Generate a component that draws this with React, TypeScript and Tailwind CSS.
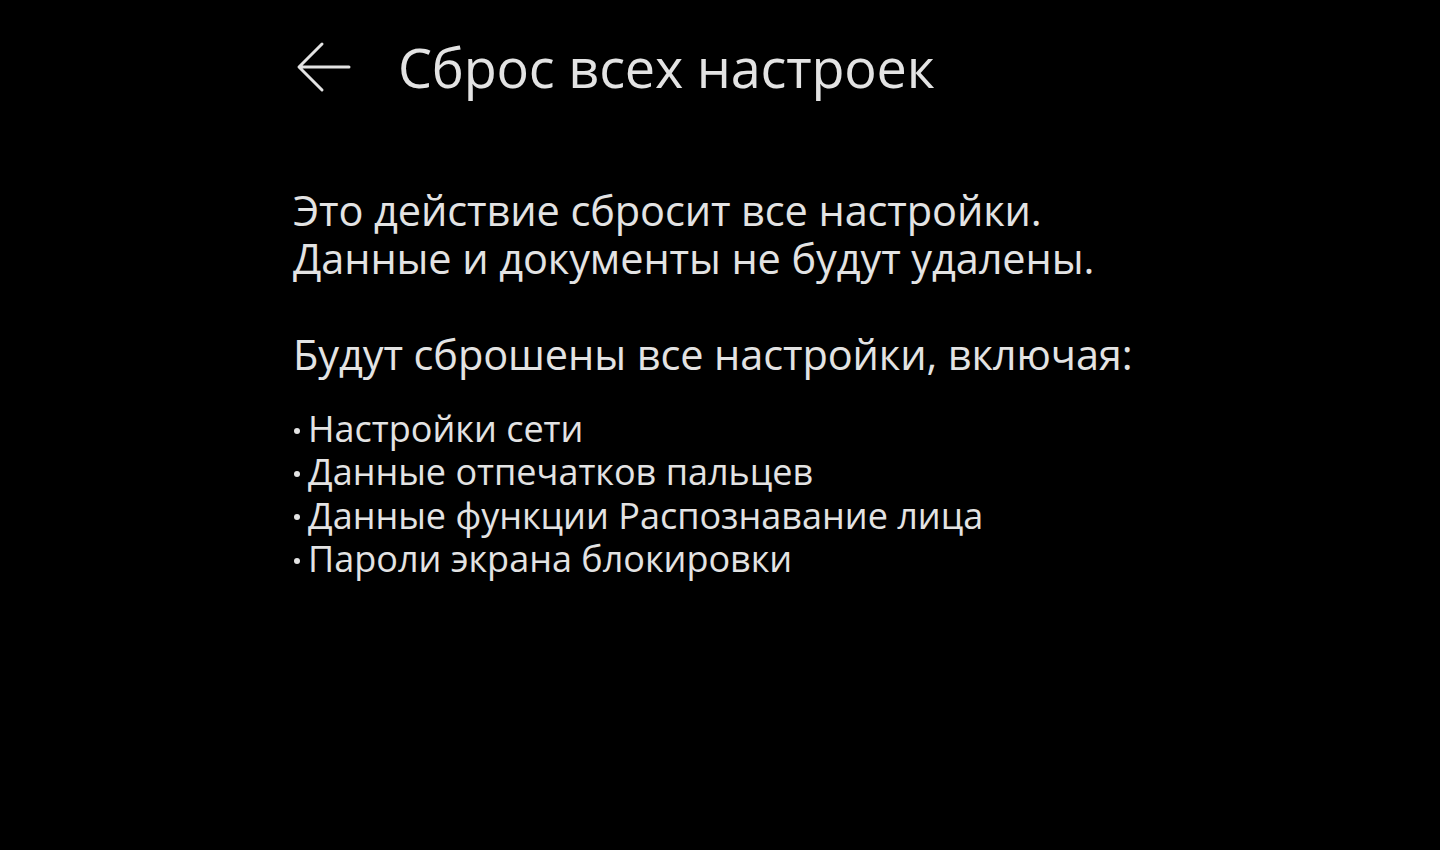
import React from 'react';

const items = [
  'Настройки сети',
  'Данные отпечатков пальцев',
  'Данные функции Распознавание лица',
  'Пароли экрана блокировки',
];

export default function App() {
  return (
    <div
      className="w-[1440px] h-[850px] bg-black text-[#e3e3e3] overflow-hidden"
      style={{ fontFamily: '"Open Sans", "Noto Sans", sans-serif' }}
    >
      <div className="pl-[293px] pt-[34px]">
        {/* Header */}
        <div className="flex items-center h-[66px]">
          <svg width="56" height="52" viewBox="0 0 56 52" className="ml-[3px]" fill="none">
            <path d="M53 26H4M26 3L3 26l23 23" stroke="#e3e3e3" strokeWidth="3" strokeLinecap="round" strokeLinejoin="round" />
          </svg>
          <h1 className="ml-[46px] text-[54px] leading-none font-normal tracking-[-0.2px]">Сброс всех настроек</h1>
        </div>

        {/* Description */}
        <div className="mt-[86px] text-[41.5px] leading-[48px] tracking-[-0.1px]">
          <p>Это действие сбросит все настройки.</p>
          <p>Данные и документы не будут удалены.</p>
          <p className="mt-[48px]">Будут сброшены все настройки, включая:</p>
        </div>

        <ul className="mt-[29px] text-[36px] leading-[43.3px]">
          {items.map((item) => (
            <li key={item} className="flex items-center">
              <span className="w-[6px] h-[6px] rounded-full bg-[#e3e3e3] mr-[8px] ml-[1px] mt-[4px]" />
              <span>{item}</span>
            </li>
          ))}
        </ul>
      </div>
    </div>
  );
}
